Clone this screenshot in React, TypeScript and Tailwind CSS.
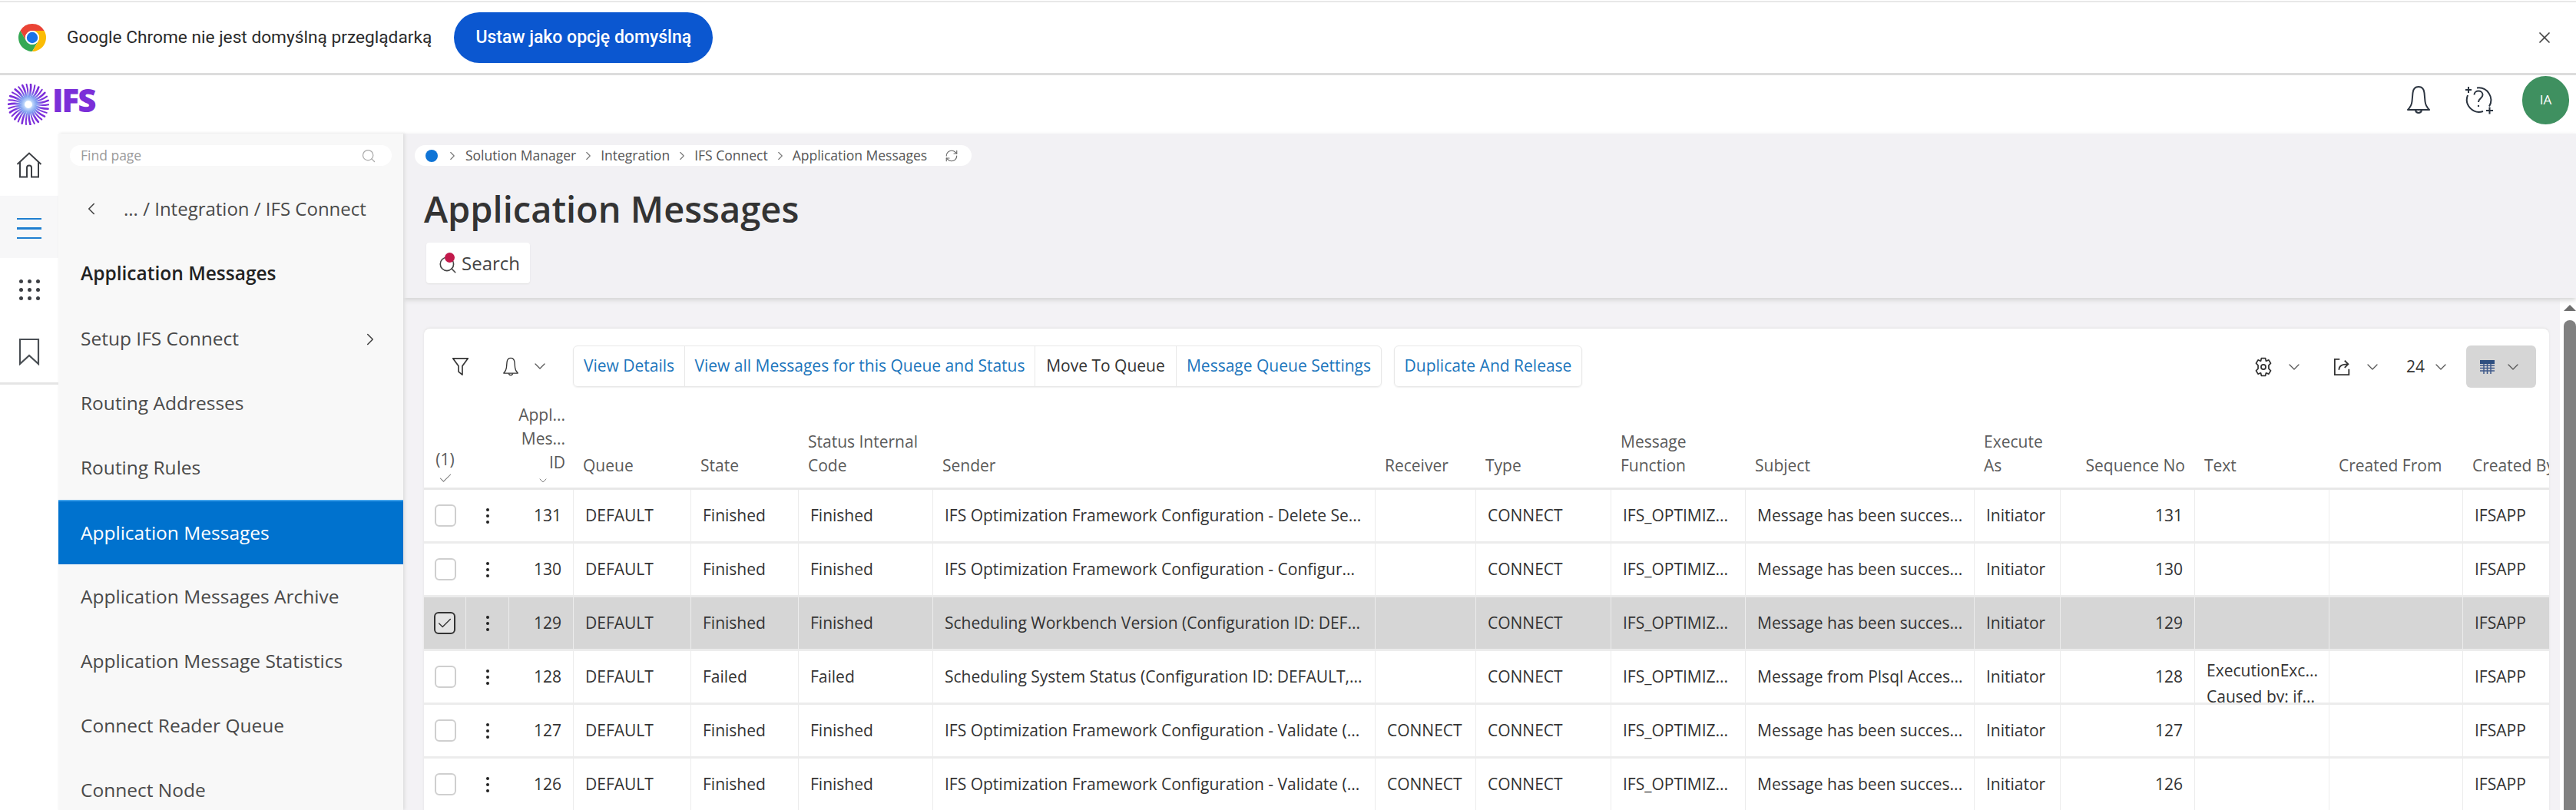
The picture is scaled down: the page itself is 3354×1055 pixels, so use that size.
import React from "react";
import { ChevronDown, ChevronLeft, ChevronRight, Search, X, RefreshCw, Check } from "lucide-react";

const columns =
  "grid grid-cols-[55px_56px_84px_153px_140px_175px_576px_131px_176px_175px_298px_112px_175px_175px_174px_112px]";

interface Row {
  id: number;
  state: string;
  sender: string;
  receiver?: string;
  subject: string;
  selected?: boolean;
  text?: string[];
}

const rows: Row[] = [
  { id: 131, state: "Finished", sender: "IFS Optimization Framework Configuration - Delete Se...", subject: "Message has been succes..." },
  { id: 130, state: "Finished", sender: "IFS Optimization Framework Configuration - Configur...", subject: "Message has been succes..." },
  { id: 129, state: "Finished", sender: "Scheduling Workbench Version (Configuration ID: DEF...", subject: "Message has been succes...", selected: true },
  { id: 128, state: "Failed", sender: "Scheduling System Status (Configuration ID: DEFAULT,...", subject: "Message from Plsql Acces...", text: ["ExecutionExc...", "Caused by: if..."] },
  { id: 127, state: "Finished", sender: "IFS Optimization Framework Configuration - Validate (...", receiver: "CONNECT", subject: "Message has been succes..." },
  { id: 126, state: "Finished", sender: "IFS Optimization Framework Configuration - Validate (...", receiver: "CONNECT", subject: "Message has been succes..." },
];

const navItems = [
  "Routing Addresses",
  "Routing Rules",
  "Application Messages",
  "Application Messages Archive",
  "Application Message Statistics",
  "Connect Reader Queue",
  "Connect Node",
];

const ChromeLogo = () => (
  <svg viewBox="4 4 40 40" className="w-[36px] h-[36px] shrink-0">
    <path fill="#ea4335" d="M24 4a20 20 0 0 1 17.32 10H24a10 10 0 0 0-8.66 15L6.68 14A20 20 0 0 1 24 4z" />
    <path fill="#34a853" d="M6.68 14L15.34 29a10 10 0 0 0 17.32 0L24 44A20 20 0 0 1 6.68 14z" />
    <path fill="#fbbc04" d="M41.32 14H24a10 10 0 0 1 8.66 15L24 44A20 20 0 0 0 41.32 14z" />
    <circle cx="24" cy="24" r="10" fill="#fff" />
    <circle cx="24" cy="24" r="8" fill="#1a73e8" />
  </svg>
);

const Sunburst = () => {
  const spokes = Array.from({ length: 30 }, (_, i) => (i * 360) / 30);
  return (
    <svg viewBox="-27 -27 54 54" className="w-[54px] h-[54px]">
      <defs>
        <radialGradient id="sun" gradientUnits="userSpaceOnUse" cx="0" cy="0" r="27">
          <stop offset="0.12" stopColor="#d8eeff" />
          <stop offset="0.4" stopColor="#7fa0f0" />
          <stop offset="0.7" stopColor="#7d32dc" />
          <stop offset="1" stopColor="#7a2bd8" />
        </radialGradient>
      </defs>
      {spokes.map((deg) => (
        <path
          key={deg}
          d="M0 -6 Q4 -16 3 -26"
          transform={`rotate(${deg})`}
          stroke="url(#sun)"
          strokeWidth={deg % 24 === 0 ? 2.6 : 2}
          strokeLinecap="round"
          fill="none"
        />
      ))}
    </svg>
  );
};

const BellIcon = ({ className }: { className: string }) => (
  <svg viewBox="0 0 32 38" fill="none" stroke="currentColor" strokeWidth="2" className={className} strokeLinejoin="round">
    <path d="M2 32c3-3 5-6 5.5-11l1-11C9 5 12 2 16 2s7 3 7.500 8l1 11c.5 5 2.500 8 5.500 11z" />
    <path d="M12 32.500c.5 2.500 2 3.500 4 3.500s3.500-1 4-3.500" />
  </svg>
);

const HelpIcon = () => (
  <svg viewBox="0 0 40 38" fill="none" stroke="#2b3440" strokeWidth="2" className="w-[40px] h-[38px]">
    <path d="M16 3.500a16 16 0 0 1 16 24" />
    <path d="M4 13a16 16 0 0 0 20 21" />
    <path d="M1 6h8M5 2v8M28 33h9M32.500 28.500v9" />
    <path d="M12.500 12.500c0-3.500 3-5 5.500-5s5.500 1.500 5.500 5c0 4.500-5.500 4.500-5.500 9.500" />
    <circle cx="18" cy="27" r="1.200" fill="#2b3440" stroke="none" />
  </svg>
);

const Kebab = () => (
  <div className="flex flex-col gap-[4px] items-center">
    <span className="w-[4px] h-[4px] rounded-full bg-[#222]" />
    <span className="w-[4px] h-[4px] rounded-full bg-[#222]" />
    <span className="w-[4px] h-[4px] rounded-full bg-[#222]" />
  </div>
);

const SmallChevron = () => <ChevronDown className="w-[24px] h-[24px] text-[#555]" strokeWidth={1.25} />;

const Crumb = () => <ChevronRight className="ml-[7px] w-[18px] h-[18px] text-[#777] shrink-0" strokeWidth={1.5} />;

const ToolButton = ({ label, width, dark }: { label: string; width: string; dark?: boolean }) => (
  <div className={`${width} ${dark ? "text-[#333]" : "text-[#1b75bc]"} flex items-center justify-center border-r border-[#e8e8e8] last:border-r-0`}>
    {label}
  </div>
);

const Cell = ({ children, className = "" }: { children?: React.ReactNode; className?: string }) => (
  <div className={`border-r border-[#ececec] last:border-r-0 flex items-center px-[15px] whitespace-nowrap overflow-hidden ${className}`}>
    {children}
  </div>
);

const HeaderCell = ({ lines, className = "" }: { lines: string[]; className?: string }) => (
  <div className={`flex flex-col justify-end pb-[13px] pl-[12px] leading-[31px] whitespace-nowrap overflow-hidden ${className}`}>
    {lines.map((l) => (
      <span key={l}>{l}</span>
    ))}
  </div>
);

export default function App() {
  return (
    <div className="w-[3354px] h-[1055px] overflow-hidden bg-white flex flex-col font-['Open_Sans',sans-serif]">
      {/* chrome infobar */}
      <div className="h-[3px] border-b-2 border-[#e8e8e8] shrink-0" />
      <div className="h-[92px] shrink-0 flex items-center pl-[24px] pr-[29px] font-['Roboto',sans-serif] border-b-[3px] border-[#dcdcdc] box-content">
        <ChromeLogo />
        <span className="ml-[27px] text-[22.700px] text-[#2a2a2a] whitespace-nowrap">Google Chrome nie jest domyślną przeglądarką</span>
        <button className="ml-[29px] w-[337px] h-[66px] rounded-full bg-[#0b57d0] text-white text-[23px] font-medium">
          Ustaw jako opcję domyślną
        </button>
        <X className="ml-auto w-[24px] h-[24px] text-[#444]" strokeWidth={1.75} />
      </div>

      {/* ifs header */}
      <div className="h-[76px] shrink-0 flex items-center pl-[10px] pr-[9px]">
        <Sunburst />
        <span className="ml-[4px] text-[42px] leading-none font-extrabold tracking-[-2px] text-[#7b2fd8] -translate-y-[6px]">IFS</span>
        <div className="ml-auto flex items-center">
          <BellIcon className="w-[32px] h-[38px] text-[#2b3440] -translate-y-[6px]" />
          <div className="ml-[44px] -translate-y-[6px]">
            <HelpIcon />
          </div>
          <div className="ml-[35px] w-[61px] h-[63px] -translate-y-[6px] rounded-full bg-[#3f9060] text-white text-[17px] flex items-center justify-center">
            IA
          </div>
        </div>
      </div>

      <div className="flex-1 flex min-h-0">
        {/* icon rail */}
        <div className="w-[76px] shrink-0">
          <div className="h-[81px] flex items-center justify-center">
            <svg viewBox="0 0 34 34" fill="none" stroke="#3c3f44" strokeWidth="2" className="w-[34px] h-[34px]">
              <path d="M1.500 16L17 1.500 32.500 16M5 13v19.500h9V20.500a3 3 0 0 1 6 0v12h9V13" />
            </svg>
          </div>
          <div className="h-[81px] bg-[#f7f7f8] flex flex-col items-center justify-center gap-[10px] pt-[3px]">
            <span className="w-[32px] h-[2px] bg-[#1f7fd0]" />
            <span className="w-[32px] h-[3px] bg-[#1f7fd0]" />
            <span className="w-[32px] h-[2px] bg-[#1f7fd0]" />
          </div>
          <div className="h-[81px] flex items-center justify-center pt-[2px]">
            <div className="grid grid-cols-3 gap-x-[6px] gap-y-[6px]">
              {Array.from({ length: 9 }, (_, i) => (
                <span key={i} className="w-[5px] h-[5px] rounded-full bg-[#3c3f44]" />
              ))}
            </div>
          </div>
          <div className="h-[84px] border-b-[3px] border-[#e5e5e5] flex items-center justify-center">
            <svg viewBox="0 0 28 36" fill="none" stroke="#4a4f54" strokeWidth="2.200" className="w-[28px] h-[36px]">
              <path d="M2 2h24v32L14 23 2 34z" />
            </svg>
          </div>
        </div>

        {/* navigator */}
        <div className="w-[449px] shrink-0 bg-[#f8f8f8] text-[24.500px] text-[#4a4a4a] relative z-20 shadow-[2px_0_4px_#dcdcdc]">
          <div className="mt-[15px] mx-[15px] h-[27px] rounded-full bg-white flex items-center pl-[14px] pr-[20px] text-[17.500px] text-[#9a9a9a]">
            <span>Find page</span>
            <Search className="ml-auto w-[20px] h-[20px] text-[#aaa]" strokeWidth={1.5} />
          </div>
          <div className="mt-[14px] h-[84px] flex items-center pl-[30px]">
            <ChevronLeft className="w-[26px] h-[26px] text-[#444]" strokeWidth={1.5} />
            <span className="ml-[29px] text-[24px]">... / Integration / IFS Connect</span>
          </div>
          <div className="h-[84px] flex items-center pl-[29px] font-semibold text-[#222]">Application Messages</div>
          <div className="h-[85px] flex items-center pl-[29px] pr-[30px] pt-[2px] justify-between">
            <span>Setup IFS Connect</span>
            <ChevronRight className="w-[26px] h-[26px] text-[#444]" strokeWidth={1.5} />
          </div>
          {navItems.map((item, i) => (
            <div
              key={item}
              className={`h-[84px] flex items-center pl-[29px] ${i === 2 ? "bg-[#0072ce] text-white border-t-2 border-[#3fa0ea]" : ""}`}
            >
              {item}
            </div>
          ))}
        </div>

        {/* page */}
        <div className="flex-1 min-w-0 flex flex-col bg-[#f3f2f5]">
          <div className="h-[214px] shrink-0 bg-[#f2f1f4] relative z-10 shadow-[0_3px_6px_#d4d4d4] flex flex-col items-start">
            <div className="mt-[15px] ml-[15px] w-[725px] h-[27px] rounded-full bg-white flex items-center text-[17.500px] text-[#555] pl-[14px] whitespace-nowrap">
              <span className="w-[16px] h-[16px] rounded-full bg-[#0f74d6] shrink-0" />
              <span className="ml-[3px]"><Crumb /></span>
              <span className="ml-[8px]">Solution Manager</span>
              <Crumb />
              <span className="ml-[7px]">Integration</span>
              <Crumb />
              <span className="ml-[7px]">IFS Connect</span>
              <Crumb />
              <span className="ml-[7px]">Application Messages</span>
              <RefreshCw className="ml-[23px] w-[18px] h-[18px] text-[#666]" strokeWidth={1.5} />
            </div>
            <h1 className="mt-[26px] ml-[27px] text-[47px] leading-[60px] font-semibold text-[#333] whitespace-nowrap">Application Messages</h1>
            <div className="mt-[14px] ml-[30px] w-[135px] h-[53px] bg-white rounded-[4px] shadow-[0_1px_2px_#e0e0e0] flex items-center pl-[15px] text-[24px] text-[#444]">
              <span className="relative w-[26px] h-[28px] shrink-0">
                <Search className="absolute left-0 top-[3px] w-[26px] h-[26px] text-[#444]" strokeWidth={1.5} />
                <span className="absolute left-[9px] top-0 w-[13px] h-[13px] rounded-full bg-[#c2194b]" />
              </span>
              <span className="ml-[5px]">Search</span>
            </div>
          </div>

          <div className="flex-1 min-h-0 flex">
            <div className="flex-1 min-w-0">
              {/* table card */}
              <div className="mt-[40px] ml-[27px] w-[2767px] bg-white rounded-t-[8px] shadow-[0_-1px_3px_#e2e2e2] text-[21px] text-[#333]">
                <div className="h-[77px] pt-[22px] flex items-start">
                  <div className="w-[194px] h-[54px] flex items-center pl-[36px]">
                    <svg viewBox="0 0 28 30" fill="none" stroke="#333" strokeWidth="2" className="w-[23px] h-[25px]">
                      <path d="M2 2h24L17 14v14l-6-5V14z" strokeLinejoin="round" />
                    </svg>
                    <BellIcon className="ml-[43px] w-[22px] h-[25px] text-[#333]" />
                    <span className="ml-[15px]"><SmallChevron /></span>
                  </div>
                  <div className="h-[54px] flex border border-[#e8e8e8] rounded-[6px] shadow-[0_1px_2px_#eeeeee]">
                    <ToolButton label="View Details" width="w-[145px]" />
                    <ToolButton label="View all Messages for this Queue and Status" width="w-[456px]" />
                    <ToolButton label="Move To Queue" width="w-[184px]" dark />
                    <ToolButton label="Message Queue Settings" width="w-[266px]" />
                  </div>
                  <div className="ml-[16px] h-[54px] flex border border-[#e8e8e8] rounded-[6px] shadow-[0_1px_2px_#eeeeee]">
                    <ToolButton label="Duplicate And Release" width="w-[243px]" />
                  </div>
                  <div className="ml-auto h-[55px] flex items-center pr-[17px]">
                    <svg viewBox="0 0 28 30" fill="none" stroke="#333" strokeWidth="2" className="w-[26px] h-[26px]">
                      <path d="M11 2h6l1 4 4-1.500 3 5-3 3v5l3 3-3 5-4-1.500-1 4h-6l-1-4-4 1.500-3-5 3-3v-5l-3-3 3-5L10 6z" strokeLinejoin="round" />
                      <circle cx="14" cy="15" r="3.500" />
                    </svg>
                    <span className="ml-[15px]"><SmallChevron /></span>
                    <svg viewBox="0 0 26 26" fill="none" stroke="#333" strokeWidth="2" className="ml-[39px] w-[24px] h-[24px]">
                      <path d="M9 2H2v22h20v-8" />
                      <path d="M8 17c0-5 4-8 12-8M16 4l5 5-5 5" />
                    </svg>
                    <span className="ml-[15px]"><SmallChevron /></span>
                    <span className="ml-[32px]">24</span>
                    <span className="ml-[9px]"><SmallChevron /></span>
                    <div className="ml-[21px] w-[91px] h-[55px] rounded-[6px] bg-[#d6d6d6] flex items-center pl-[18px] gap-[12px]">
                      <svg viewBox="0 0 19 18" className="w-[19px] h-[18px]">
                        <rect width="19" height="5" fill="#2f4f80" />
                        <path d="M0 7h19M0 10.500h19M0 14h19M5 5v13M9.500 5v13M14 5v13" stroke="#3f5a8a" strokeWidth="1.500" />
                      </svg>
                      <SmallChevron />
                    </div>
                  </div>
                </div>

                {/* header row */}
                <div className={`${columns} h-[130px] border-b-[3px] border-[#e8e8e8] text-[#5a5a5a] box-content`}>
                  <div className="flex flex-col justify-end items-center pb-[2px] leading-[30px]">
                    <span>(1)</span>
                    <Check className="w-[20px] h-[20px] text-[#777]" strokeWidth={1.25} />
                  </div>
                  <div />
                  <div className="flex flex-col justify-end items-end pr-[11px] leading-[31px]">
                    <span>Appl...</span>
                    <span>Mes...</span>
                    <span>ID</span>
                    <span className="h-[17px] mr-[19px]"><ChevronDown className="w-[20px] h-[16px] text-[#666]" strokeWidth={1.25} /></span>
                  </div>
                  <HeaderCell lines={["Queue"]} />
                  <HeaderCell lines={["State"]} />
                  <HeaderCell lines={["Status Internal", "Code"]} />
                  <HeaderCell lines={["Sender"]} />
                  <HeaderCell lines={["Receiver"]} />
                  <HeaderCell lines={["Type"]} />
                  <HeaderCell lines={["Message", "Function"]} />
                  <HeaderCell lines={["Subject"]} />
                  <HeaderCell lines={["Execute", "As"]} />
                  <HeaderCell lines={["Sequence No"]} className="items-end pr-[13px]" />
                  <HeaderCell lines={["Text"]} />
                  <HeaderCell lines={["Created From"]} />
                  <HeaderCell lines={["Created By"]} />
                </div>

                {rows.map((row) => (
                  <div
                    key={row.id}
                    className={`${columns} h-[70px] border-b-[3px] border-[#ececec] ${row.selected ? "bg-[#d6d6d6]" : ""}`}
                  >
                    <div className={`flex items-center justify-center ${row.selected ? "border-r border-[#ececec]" : ""}`}>
                      <span
                        className={`w-[28px] h-[29px] rounded-[6px] border-2 flex items-center justify-center ${
                          row.selected ? "border-[#333] bg-[#e4e4e4]" : "border-[#cfcfcf] bg-white"
                        }`}
                      >
                        {row.selected && <Check className="w-[22px] h-[22px] text-[#333]" strokeWidth={1.5} />}
                      </span>
                    </div>
                    <div className={`flex items-center justify-center ${row.selected ? "border-r border-[#ececec]" : ""}`}>
                      <Kebab />
                    </div>
                    <Cell className="justify-end">{row.id}</Cell>
                    <Cell>DEFAULT</Cell>
                    <Cell>{row.state}</Cell>
                    <Cell>{row.state}</Cell>
                    <Cell>{row.sender}</Cell>
                    <Cell>{row.receiver}</Cell>
                    <Cell>CONNECT</Cell>
                    <Cell>IFS_OPTIMIZ...</Cell>
                    <Cell>{row.subject}</Cell>
                    <Cell>Initiator</Cell>
                    <Cell className="justify-end">{row.id}</Cell>
                    <Cell className="flex-col !items-start justify-center leading-[34px] pt-[17px]">
                      {row.text?.map((t) => <span key={t}>{t}</span>)}
                    </Cell>
                    <Cell />
                    <Cell>IFSAPP</Cell>
                  </div>
                ))}
              </div>
            </div>

            {/* scrollbar */}
            <div className="w-[21px] shrink-0 bg-white flex flex-col items-end pt-[9px]">
              <svg viewBox="0 0 16 8" className="w-[16px] h-[8px] shrink-0">
                <path d="M8 0l8 8H0z" fill="#6e6e6e" />
              </svg>
              <div className="mt-[12px] w-[16px] flex-1 bg-[#808080] rounded-t-full" />
            </div>
          </div>
        </div>
      </div>
    </div>
  );
}
